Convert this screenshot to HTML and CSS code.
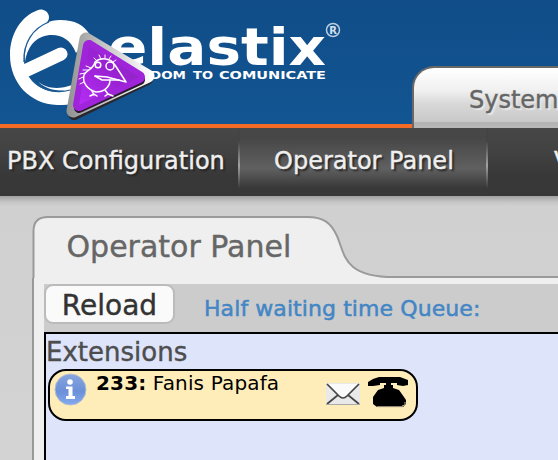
FILE: index.html
```html
<!DOCTYPE html>
<html lang="en">
<head>
<meta charset="utf-8">
<title>Operator Panel</title>
<link rel="stylesheet" href="styles.css">
</head>
<body>
<header class="header">
  <svg class="logo" width="360" height="124" viewBox="0 0 360 124" role="img" aria-label="elastix">
    <defs>
      <linearGradient id="violet" x1="1" y1="0" x2="0" y2="1"><stop offset="0" stop-color="#8d27bd"/><stop offset=".5" stop-color="#9b22d5"/><stop offset="1" stop-color="#b52df5"/></linearGradient>
      <linearGradient id="metal" gradientUnits="userSpaceOnUse" x1="68" y1="0" x2="152" y2="0"><stop offset="0" stop-color="#929292"/><stop offset=".4" stop-color="#c3c3c3"/><stop offset="1" stop-color="#fff"/></linearGradient>
    </defs>
    <path d="M42 9.500C50 11 51 20 46 23C32 31 24 42 24 61C25 79 39 92 60 92L76 86V103C70 105 64 105 57 105C30 104 10 83 10 55C10 33 22 16 37 10.500Q40 9 42 9.500Z" fill="#fff"/>
    <path d="M25 62C23 36 40 20 60 20C75 20 84 25 90 35L76 53C71 40 62 35 52 35C38 35 28 44 25 62Z" fill="#fff"/>
    <path d="M27 70L61 54" stroke="#fff" stroke-width="13" stroke-linecap="round"/>
    <path d="M36 80C46 89 58 90 72 85V89C57 93 45 89 36 80Z" fill="#fff"/>
    <path d="M24 62C23 43 33 28 49 22M32 80C43 91 57 94 70 90" fill="none" stroke="#1c5b96" stroke-width="1.300"/>
    <g class="wordmark">
      <text x="108" y="65" font-size="51" textLength="218" lengthAdjust="spacingAndGlyphs">elastix</text>
    </g>
    <g class="tagline">
      <text x="150" y="79" textLength="36" lengthAdjust="spacingAndGlyphs">DOM</text>
      <text x="193" y="79" textLength="20" lengthAdjust="spacingAndGlyphs">TO</text>
      <text x="219" y="79" textLength="107" lengthAdjust="spacingAndGlyphs">COMUNICATE</text>
    </g>
    <circle cx="333" cy="30" r="6.5" fill="none" stroke="#b9cde0" stroke-width="1.500"/>
    <text class="registered" x="329.3" y="34">R</text>
    <path d="M87 42L147 79L74 114Z" fill="#29272b" stroke="#29272b" stroke-width="12" stroke-linejoin="round"/>
    <path d="M86 39L148 76L73 111Z" fill="url(#metal)" stroke="url(#metal)" stroke-width="13" stroke-linejoin="round"/>
    <path d="M89 49L140 80L79 108Z" fill="#28192f" stroke="#28192f" stroke-width="10" stroke-linejoin="round"/>
    <path d="M89 46L139 77L79 105Z" fill="#9f24da" stroke="#9f24da" stroke-width="12" stroke-linejoin="round"/>
    <path d="M89 46L139 77L79 105Z" fill="url(#violet)"/>
    <g fill="none" stroke="#fff" stroke-width="1.500" stroke-linejoin="round" stroke-linecap="round">
      <path d="M95 76L107 77L126 82L115 65C111 58 101 57 95 62C93 70 87 69 84 75C82 83 88 90 96 92C104 92 110 87 110 80"/>
      <path d="M95 76L102 80L119 80M92 91L94 95M90 96L94 94L97 96M105 90L108 94M105 96L108 94L113 96"/>
      <circle cx="110" cy="66" r="4"/><circle cx="98" cy="65" r="2.8"/>
      <path d="M97 61L94 58M101 59L99 55M105 58L105 55M109 59L111 56M113 62L116 60M91 68L86 66M88 70L83 70M85 73L80 74M83 77L79 79M84 82L80 84" stroke-width="1"/>
    </g>
  </svg>
  <div class="main-tab">System</div>
</header>
<nav class="menu">
  <a class="item first">PBX Configuration</a>
  <a class="item active">Operator Panel</a>
  <a class="item next">V</a>
</nav>
<main class="page">
  <div class="title-row">
    <svg class="tab-shape" width="526" height="62" viewBox="0 0 526 62" aria-hidden="true">
      <path d="M1 62V15Q1 1 16 1H275C292 1 299 7 305 20C313 38 311 61 362 61H526V62Z" fill="#efefef"/>
      <path d="M1.5 62V15Q1.5 1 16 1H275C292 1 299 7 305 20C313 38 311 61 362 61H526" fill="none" stroke="#999a99" stroke-width="2"/>
    </svg>
    <h1 class="title">Operator Panel</h1>
  </div>
  <section class="content">
    <div class="toolbar">
      <button class="reload" type="button">Reload</button>
      <span class="queue">Half waiting time Queue:</span>
    </div>
    <div class="board">
      <h2 class="board-title">Extensions</h2>
      <div class="extension">
        <svg class="info" width="33" height="33" viewBox="0 0 33 33" aria-hidden="true">
          <defs><linearGradient id="blue" x1="0" y1="0" x2="0" y2="1"><stop offset="0" stop-color="#88a5df"/><stop offset=".55" stop-color="#6c90d8"/><stop offset="1" stop-color="#85a9ed"/></linearGradient></defs>
          <circle cx="16.5" cy="16.5" r="15.5" fill="url(#blue)" stroke="#b2bed3"/>
          <circle cx="16" cy="9" r="2.8" fill="#fff"/>
          <path d="M12 13.5H18.5V23H21V26H12V23H14.5V16H12Z" fill="#fff"/>
        </svg>
        <span class="name"><b>233:</b> Fanis Papafa</span>
        <svg class="mail" width="34" height="22" viewBox="0 0 34 22" aria-hidden="true">
          <path d="M0 0H34V22H0Z" fill="#e9e9e9"/>
          <path d="M2 1H32L21 13Q17 16 13 13Z" fill="#fafafa"/>
          <path d="M1 1L13 13Q17 17 21 13L33 1M1 21L12 12M33 21L22 12" fill="none" stroke="#454545" stroke-width="1.700"/>
          <path d="M0 21.5H34" stroke="#aaa"/>
        </svg>
        <svg class="phone" width="41" height="31" viewBox="0 0 41 31" aria-hidden="true">
          <path d="M0 9V5L5 2L11 0H32L40 3V8L35 9L29 8V6H23V8H25V11L31 13L36 20L38 23V27L35 30H9L5 27V20L10 13L16 11V8H18V6H12V8L5 9Z"/>
          <path d="M9 29.7H35M37 25V28L34 29" fill="none" stroke="#b1a892" stroke-width="1"/>
        </svg>
      </div>
    </div>
  </section>
</main>
</body>
</html>
```
FILE: styles.css
```css
* { box-sizing: border-box; }
body {
  margin: 0;
  height: 460px;
  overflow: hidden;
  font-family: Verdana, "DejaVu Sans", sans-serif;
  background: #d3d3d3;
}
.header {
  display: flex;
  justify-content: space-between;
  align-items: flex-end;
  height: 128px;
  background: linear-gradient(#104d88, #125592);
  border-bottom: 4px solid #f56b25;
}
.logo { display: block; flex: none; }
.wordmark, .tagline { fill: #fff; font-weight: bold; }
.tagline { font-size: 11px; }
.registered { font-size: 10px; font-weight: bold; fill: #d5e1ec; }
.main-tab {
  width: 146px;
  height: 62px;
  margin-bottom: -4px;
  padding: 17px 0 0 55px;
  overflow: hidden;
  border: 2px solid #686868;
  border-width: 2px 0 0 2px;
  border-top-left-radius: 22px;
  background: linear-gradient(#fff 0, #f0f0f0 38%, #d8d8d8 60%, #c9c9c9 89%, #b3b3b3 91%, #b8b8b8);
  color: #666;
  font-size: 24px;
  line-height: 30px;
  text-shadow: 2px 2px 1px #e8e8e8;
  -webkit-text-stroke: .4px #666;
}
.menu {
  display: flex;
  height: 68px;
  background: linear-gradient(#474747, #424242 35%, #383838 70%, #373737);
  color: #efefef;
  font-size: 24px;
  line-height: 28px;
  text-shadow: 2px 2px 2px #222;
  -webkit-text-stroke: .4px #efefef;
}
.item { flex: none; height: 68px; padding-top: 19px; white-space: nowrap; }
.first { width: 238px; padding-left: 7px; }
.active {
  width: 250px;
  padding-left: 34px;
  border-right: 2px solid;
  border-left: 2px solid;
  border-image: linear-gradient(#444 20%, #a2a2a2 55%, #383838 88%) 1;
  background: linear-gradient(#474747 15%, #606060 60%, #383838 88%);
}
.next { padding-left: 66px; }
.page {
  height: 264px;
  padding: 20px 0 0 32px;
  background: linear-gradient(#a0a0a0, #c5c5c5 6px, #d0d0d0 10px, #d3d3d3);
}
.title-row { display: grid; height: 62px; }
.tab-shape, .title { grid-area: 1 / 1; }
.title {
  margin: 13px 0 0 34.5px;
  color: #666;
  font-size: 30px;
  font-weight: normal;
  line-height: 36px;
  -webkit-text-stroke: .4px #666;
}
.content {
  height: 182px;
  padding: 6px 0 0 10px;
  border-left: 2px solid #999;
  background: #efefef;
}
.toolbar {
  display: flex;
  height: 48px;
  background: #ccc;
}
.reload {
  width: 131px;
  height: 40px;
  padding: 3px 0 0;
  border: 2px solid #bbb;
  border-radius: 9px;
  background: #fafafa;
  color: #333;
  font: 28px/33px Verdana, "DejaVu Sans", sans-serif;
  -webkit-text-stroke: .4px #333;
}
.queue {
  margin: 10px 0 0 29px;
  color: #4386c5;
  font-size: 22px;
  line-height: 30px;
  letter-spacing: .08px;
  white-space: nowrap;
  -webkit-text-stroke: .5px #4386c5;
}
.board {
  height: 140px;
  border: 2px solid #000;
  border-width: 2px 0 0 2px;
  background: #dee4fa;
}
.board-title {
  margin: 0;
  padding-top: 1px;
  color: #4d4d4d;
  font-size: 26px;
  font-weight: normal;
  line-height: 34px;
  -webkit-text-stroke: .4px #4d4d4d;
}
.extension {
  display: flex;
  width: 370px;
  height: 52px;
  margin: 0 0 0 2px;
  padding: 2px 0 0 4px;
  border: 2px solid #000;
  border-radius: 18px;
  background: #ffedb9;
  color: #000;
  font-size: 20px;
  line-height: 20px;
  letter-spacing: .15px;
}
.info, .mail, .phone { flex: none; }
.name { width: 229px; margin-left: 9px; white-space: nowrap; }
.mail { margin: 10px 8px 0 1px; }
.phone { margin-top: 4px; }
```
